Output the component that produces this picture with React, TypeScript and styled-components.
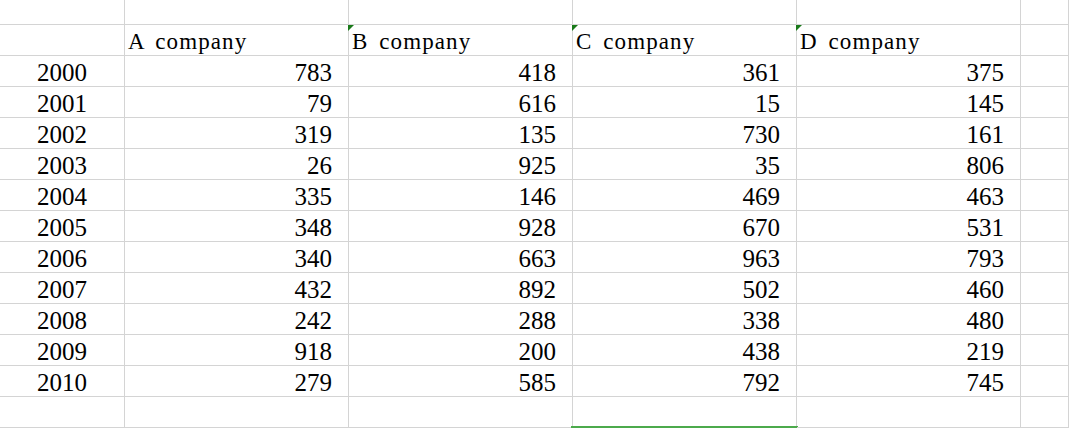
import * as React from 'react'
import styled, { createGlobalStyle } from 'styled-components'

const GlobalStyle = createGlobalStyle`
  html, body {
    margin: 0;
    padding: 0;
    background: #ffffff;
    overflow: hidden;
  }
`

const Sheet = styled.div`
  display: grid;
  grid-template-columns: 125px 224px 224px 224px 224px 1fr;
  grid-template-rows: 25px repeat(13, 31px);
  width: 1069px;
  height: 428px;
  font-family: 'Liberation Serif', 'Times New Roman', serif;
  color: #000000;
`

const Cell = styled.div<{ $align?: 'left' | 'right' | 'center'; $flag?: boolean; $selectedBelow?: boolean }>`
  position: relative;
  box-sizing: border-box;
  border-right: 1px solid #d4d4d4;
  border-bottom: 1px solid #d4d4d4;
  display: flex;
  align-items: flex-end;
  justify-content: ${(p) => (p.$align === 'right' ? 'flex-end' : p.$align === 'center' ? 'center' : 'flex-start')};
  padding: 0 ${(p) => (p.$align === 'right' ? '16px' : '0')} 0 ${(p) => (p.$align === 'left' ? '3px' : '0')};
  font-size: 25px;
  line-height: 27px;
  white-space: nowrap;

  ${(p) =>
    p.$flag &&
    `
    &::before {
      content: '';
      position: absolute;
      left: -1px;
      top: 0;
      width: 0;
      height: 0;
      border-top: 6px solid #1a7a1a;
      border-right: 6px solid transparent;
    }
  `}

  ${(p) =>
    p.$selectedBelow &&
    `
    &::after {
      content: '';
      position: absolute;
      left: -2px;
      right: -2px;
      bottom: -1px;
      height: 2px;
      background: #4caa4c;
    }
  `}
`

const HeaderText = styled.span`
  font-size: 23px;
  line-height: 26px;
  letter-spacing: 1.1px;
  word-spacing: 4px;
`

const years = [2000, 2001, 2002, 2003, 2004, 2005, 2006, 2007, 2008, 2009, 2010]
const data: number[][] = [
  [783, 418, 361, 375],
  [79, 616, 15, 145],
  [319, 135, 730, 161],
  [26, 925, 35, 806],
  [335, 146, 469, 463],
  [348, 928, 670, 531],
  [340, 663, 963, 793],
  [432, 892, 502, 460],
  [242, 288, 338, 480],
  [918, 200, 438, 219],
  [279, 585, 792, 745],
]
const companies = ['A company', 'B company', 'C company', 'D company']

export default function App() {
  return (
    <>
      <GlobalStyle />
      <Sheet>
        {Array.from({ length: 6 }).map((_, i) => (
          <Cell key={`top-${i}`} />
        ))}

        <Cell />
        {companies.map((c, i) => (
          <Cell key={c} $align="left" $flag={i > 0}>
            <HeaderText>{c}</HeaderText>
          </Cell>
        ))}
        <Cell />

        {years.map((y, r) => (
          <React.Fragment key={y}>
            <Cell $align="center">{y}</Cell>
            {data[r].map((v, c) => (
              <Cell key={c} $align="right">
                {v}
              </Cell>
            ))}
            <Cell />
          </React.Fragment>
        ))}

        <Cell />
        <Cell />
        <Cell />
        <Cell $selectedBelow />
        <Cell />
        <Cell />
      </Sheet>
    </>
  )
}
